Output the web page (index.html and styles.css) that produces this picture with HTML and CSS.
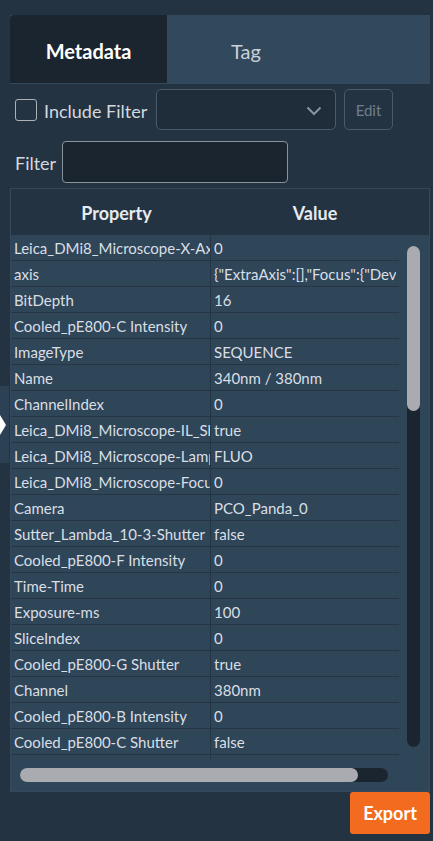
FILE: index.html
```html
<!DOCTYPE html>
<html>
<head>
<meta charset="utf-8">
<link rel="stylesheet" href="styles.css">
</head>
<body>
<div class="handle"><span class="handle-arrow"></span></div>
<div class="panel">
  <div class="tabs">
    <div class="tab tab-active">Metadata</div>
    <div class="tab">Tag</div>
  </div>
  <div class="filter-row">
    <label class="check-label"><span class="checkbox"></span>Include Filter</label>
    <div class="select">
      <svg class="chev" width="16" height="10" viewBox="0 0 16 10"><path d="M1.5 1.5 L8 8 L14.5 1.5" fill="none" stroke="#8794a1" stroke-width="2"/></svg>
    </div>
    <div class="edit-btn">Edit</div>
  </div>
  <div class="filter-row2">
    <span class="filter-label">Filter</span>
    <div class="filter-input"></div>
  </div>
  <div class="table">
    <div class="thead">
      <div class="th th-prop">Property</div>
      <div class="th th-val">Value</div>
    </div>
    <div class="tbody-wrap">
      <div class="rows">
        <div class="row"><div class="c1">Leica_DMi8_Microscope-X-Axis-Position</div><div class="c2">0</div></div>
        <div class="row"><div class="c1">axis</div><div class="c2">{"ExtraAxis":[],"Focus":{"Device":""}}</div></div>
        <div class="row"><div class="c1">BitDepth</div><div class="c2">16</div></div>
        <div class="row"><div class="c1">Cooled_pE800-C Intensity</div><div class="c2">0</div></div>
        <div class="row"><div class="c1">ImageType</div><div class="c2">SEQUENCE</div></div>
        <div class="row"><div class="c1">Name</div><div class="c2">340nm / 380nm</div></div>
        <div class="row"><div class="c1">ChannelIndex</div><div class="c2">0</div></div>
        <div class="row"><div class="c1">Leica_DMi8_Microscope-IL_Shutter</div><div class="c2">true</div></div>
        <div class="row"><div class="c1">Leica_DMi8_Microscope-Lamp</div><div class="c2">FLUO</div></div>
        <div class="row"><div class="c1">Leica_DMi8_Microscope-Focus</div><div class="c2">0</div></div>
        <div class="row"><div class="c1">Camera</div><div class="c2">PCO_Panda_0</div></div>
        <div class="row"><div class="c1">Sutter_Lambda_10-3-Shutter</div><div class="c2">false</div></div>
        <div class="row"><div class="c1">Cooled_pE800-F Intensity</div><div class="c2">0</div></div>
        <div class="row"><div class="c1">Time-Time</div><div class="c2">0</div></div>
        <div class="row"><div class="c1">Exposure-ms</div><div class="c2">100</div></div>
        <div class="row"><div class="c1">SliceIndex</div><div class="c2">0</div></div>
        <div class="row"><div class="c1">Cooled_pE800-G Shutter</div><div class="c2">true</div></div>
        <div class="row"><div class="c1">Channel</div><div class="c2">380nm</div></div>
        <div class="row"><div class="c1">Cooled_pE800-B Intensity</div><div class="c2">0</div></div>
        <div class="row"><div class="c1">Cooled_pE800-C Shutter</div><div class="c2">false</div></div>
        <div class="row"><div class="c1">FrameIndex</div><div class="c2">0</div></div>
      </div>
      <div class="vscroll"><div class="vthumb"></div></div>
    </div>
    <div class="hscroll"><div class="hthumb"></div></div>
  </div>
  <div class="actions">
    <div class="export-btn">Export</div>
  </div>
</div>
</body>
</html>
```
FILE: styles.css
```css
* { box-sizing: border-box; }
html, body { margin: 0; padding: 0; }
body {
  background: #243342;
  font-family: Lato, "Noto Sans", sans-serif;
  color: #d9dfe5;
  width: 433px;
  height: 841px;
  overflow: hidden;
  position: relative;
}
.handle {
  position: absolute;
  left: 0;
  top: 386px;
  width: 9px;
  height: 77px;
  background: #2d4154;
}
.handle-arrow {
  position: absolute;
  left: 0;
  top: 29px;
  width: 0;
  height: 0;
  border-top: 10px solid transparent;
  border-bottom: 10px solid transparent;
  border-left: 6px solid #ffffff;
}
.panel {
  padding: 15px 3px 0 10px;
}
.tabs {
  display: flex;
  height: 69px;
  background: #32485c;
  border-bottom: 1px solid #34495c;
}
.tab {
  flex: 0 0 158px;
  display: flex;
  align-items: center;
  justify-content: center;
  color: #c9d1d9;
  font-size: 20px;
  padding-top: 4px;
}
.tab-active {
  flex: 0 0 157px;
  background: #1a2530;
  color: #ffffff;
  font-weight: 700;
  border-radius: 4px 0 0 0;
}
.filter-row {
  display: flex;
  align-items: center;
  margin-top: 5px;
  height: 41px;
}
.check-label {
  display: flex;
  align-items: center;
  font-size: 18px;
  color: #d3d9df;
  margin-left: 5px;
  width: 141px;
  padding-top: 2px;
}
.checkbox {
  width: 22px;
  height: 22px;
  border: 1.5px solid #aab1b8;
  border-radius: 3px;
  margin-right: 7px;
  margin-top: -2px;
}
.select {
  width: 180px;
  height: 41px;
  background: #1f2c3a;
  border: 1px solid #4a5a6a;
  border-radius: 5px;
  display: flex;
  align-items: center;
  justify-content: flex-end;
  padding-right: 13px;
}
.chev { margin-top: 2px; }
.edit-btn {
  width: 49px;
  height: 41px;
  margin-left: 8px;
  border: 1px solid #4a5a6a;
  border-radius: 5px;
  display: flex;
  align-items: center;
  justify-content: center;
  color: #6f7e8c;
  font-size: 15px;
}
.filter-row2 {
  display: flex;
  align-items: center;
  margin-top: 11px;
  height: 42px;
}
.filter-label {
  font-size: 18px;
  color: #d3d9df;
  margin-left: 5px;
  width: 47px;
  padding-top: 2px;
}
.filter-input {
  width: 226px;
  height: 42px;
  background: #1b2530;
  border: 1px solid #8a939c;
  border-radius: 4px;
}
.table {
  margin-top: 5px;
  height: 604px;
  background: #2f4558;
  border: 1px solid #34495c;
  display: flex;
  flex-direction: column;
}
.thead {
  display: flex;
  height: 46px;
  background: #243342;
  flex: 0 0 46px;
  align-items: center;
  font-weight: 700;
  font-size: 18px;
  color: #e6ebef;
}
.th { text-align: center; padding-top: 1px; }
.th-prop { width: 211px; }
.th-val { width: 186px; }
.tbody-wrap {
  display: flex;
  height: 524px;
  overflow: hidden;
}
.rows {
  width: 388px;
  flex: 0 0 388px;
}
.row {
  display: flex;
  height: 26px;
  border-bottom: 1px solid #253545;
  font-size: 15px;
  color: #d9dfe5;
}
.c1, .c2 {
  white-space: nowrap;
  overflow: hidden;
  line-height: 27px;
  height: 25px;
}
.c1 {
  width: 200px;
  flex: 0 0 200px;
  padding-left: 3px;
  border-right: 1px solid #253545;
}
.c2 {
  flex: 1;
  padding-left: 3px;
  margin-right: 3px;
}
.vscroll {
  width: 13px;
  height: 501px;
  margin-top: 11px;
  margin-left: 8px;
  background: #1b2530;
  border-radius: 7px;
}
.vthumb {
  height: 165px;
  background: #a9abb0;
  border-radius: 7px;
}
.hscroll {
  width: 368px;
  height: 14px;
  margin: 9px 0 0 9px;
  background: #1b2530;
  border-radius: 7px;
}
.hthumb {
  width: 338px;
  height: 14px;
  background: #a9abb0;
  border-radius: 7px;
}
.actions {
  display: flex;
  justify-content: flex-end;
}
.export-btn {
  width: 80px;
  height: 42px;
  background: #f26b1f;
  border-radius: 3px;
  color: #ffffff;
  font-weight: 700;
  font-size: 18px;
  display: flex;
  align-items: center;
  justify-content: center;
}
```
